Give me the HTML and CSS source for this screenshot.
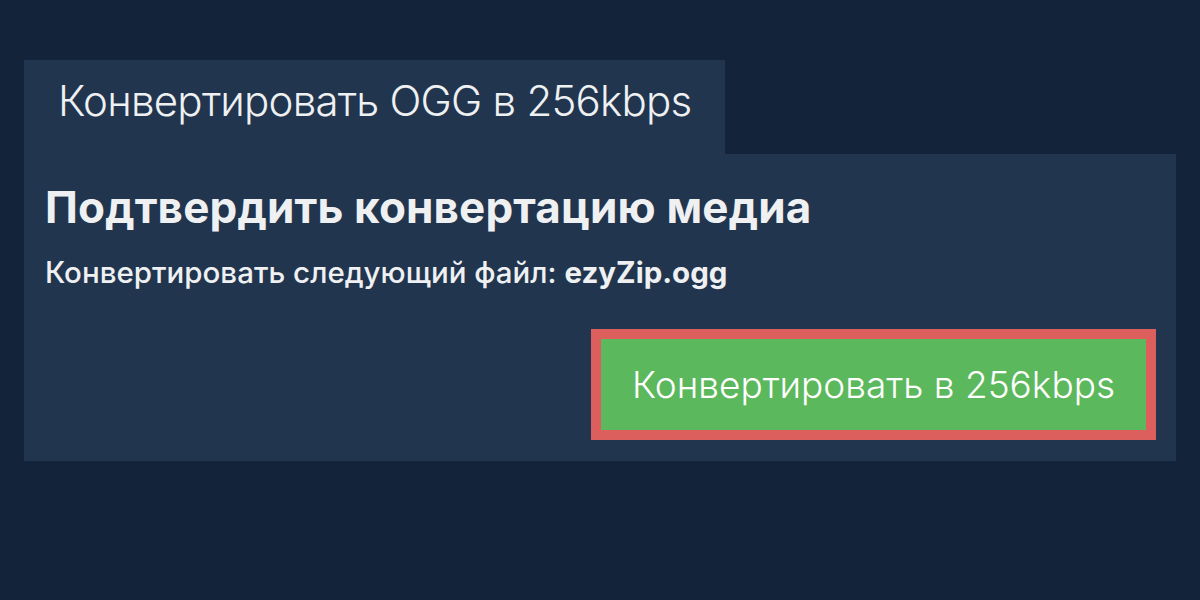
FILE: index.html
```html
<!DOCTYPE html>
<html lang="ru">
<head>
<meta charset="utf-8">
<link rel="stylesheet" href="styles.css">
</head>
<body>
<div class="wrap">
  <div class="tab">Конвертировать OGG в 256kbps</div>
  <div class="panel">
    <h1 class="title">Подтвердить конвертацию медиа</h1>
    <p class="desc">Конвертировать следующий файл: <b>ezyZip.ogg</b></p>
    <div class="actions">
      <button class="btn">Конвертировать в 256kbps</button>
    </div>
  </div>
</div>
</body>
</html>
```
FILE: styles.css
```css
html, body {
  margin: 0;
  padding: 0;
  background: #12233a;
  font-family: Inter, "Noto Sans", sans-serif;
  color: #eef0f2;
}
.wrap {
  padding: 60px 24px 0;
}
.tab {
  display: inline-block;
  width: 701px;
  box-sizing: border-box;
  height: 94px;
  padding: 16px 0 0 34px;
  background: #21354e;
  font-size: 42px;
  font-weight: 300;
  line-height: 50px;
  letter-spacing: -0.75px;
  vertical-align: top;
}
.panel {
  background: #21354e;
  padding: 27px 20px 21px 21px;
}
.title {
  margin: 0;
  font-size: 44px;
  font-weight: 700;
  line-height: 52px;
  letter-spacing: 0.15px;
}
.desc {
  margin: 21px 0 0;
  font-size: 29.5px;
  font-weight: 500;
  line-height: 36px;
}
.desc b {
  font-weight: 700;
}
.actions {
  display: flex;
  justify-content: flex-end;
  margin-top: 39px;
}
.btn {
  width: 565px;
  height: 111px;
  box-sizing: border-box;
  border: 10px solid #dc5f5d;
  background: #5cb85c;
  color: #ffffff;
  font-family: Inter, "Noto Sans", sans-serif;
  font-size: 37px;
  font-weight: 300;
  padding: 0;
  cursor: pointer;
}
```
